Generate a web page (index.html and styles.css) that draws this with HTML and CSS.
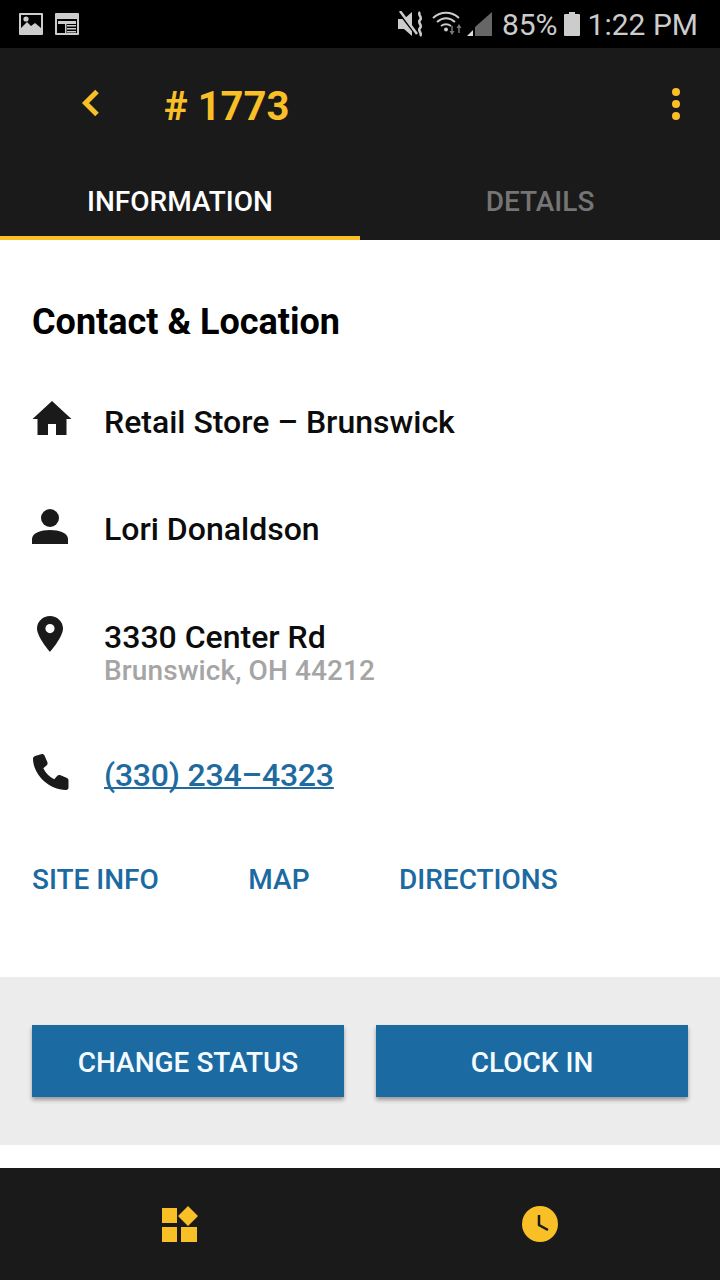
FILE: index.html
```html
<!DOCTYPE html>
<html lang="en">
  <head>
    <meta charset="UTF-8" />
    <meta name="viewport" content="width=device-width, initial-scale=1.0" />
    <title>Job 1773</title>
    <link rel="stylesheet" href="styles.css">
  </head>
  <body>
    <div class="phone">
      <div class="status-bar">
        <div class="status-left">
          <svg width="24" height="24" viewBox="0 0 24 24">
            <path fill="#ccc" fill-rule="evenodd" d="M1 1h22a1 1 0 0 1 1 1v20a1 1 0 0 1-1 1H1a1 1 0 0 1-1-1V2a1 1 0 0 1 1-1zm1 2v13l6-6 4 4 4-3 6 5V3z"/>
            <circle cx="7" cy="7" r="2.600" fill="#ccc"/>
          </svg>
          <svg width="24" height="24" viewBox="0 0 24 24">
            <path fill="#ccc" fill-rule="evenodd" d="M1 1h22a1 1 0 0 1 1 1v20a1 1 0 0 1-1 1H1a1 1 0 0 1-1-1V2a1 1 0 0 1 1-1zm1 6v14h20V7z"/>
            <path fill="#ccc" d="M3 9h18v3H3zM12 13h9v1.500h-9zM12 16h9v1.500h-9zM12 19h9v1.500h-9zM10 12h1.500v9H10z"/>
          </svg>
        </div>
        <div class="status-right">
          <svg class="icon-mute" width="28" height="26" viewBox="0 0 28 26">
            <path fill="#ccc" d="M0 8h6l8-7v24l-8-7H0z"/>
            <path stroke="#000" stroke-width="2" d="M1 2l17 22"/>
            <path stroke="#ccc" stroke-width="2.500" fill="none" d="M2 0l17 23M22 1c-3 3 3 5 0 8s3 5 0 8 3 5 0 8"/>
          </svg>
          <svg class="icon-wifi" width="32" height="26" viewBox="0 0 32 26">
            <g fill="none" stroke="#ccc" stroke-width="2">
              <path d="M1 7c8-7 18-7 26 0"/>
              <path d="M5 11c6-5 12-5 18 0"/>
              <path d="M9 15c3-2 7-2 10 0"/>
            </g>
            <circle cx="14" cy="18.500" r="2" fill="#ccc"/>
            <path stroke="#777" stroke-width="1.500" d="M20 15v8M27 14v8"/>
            <path fill="#777" d="M17.500 20h5L20 24zM24.500 17h5L27 13z"/>
          </svg>
          <svg class="icon-signal" width="25" height="24" viewBox="0 0 25 24">
            <path fill="#666" d="M8 24V15L25 0v24z"/>
            <path fill="#ddd" d="M0 24l6-6v6z"/>
          </svg>
          <span class="status-battery">85%</span>
          <svg class="icon-battery" width="16" height="24" viewBox="0 0 16 24">
            <path fill="#ccc" d="M5 0h6v2h4a1 1 0 0 1 1 1v20a1 1 0 0 1-1 1H1a1 1 0 0 1-1-1V3a1 1 0 0 1 1-1h4z"/>
          </svg>
          <span class="status-time">1:22 PM</span>
        </div>
      </div>

      <header class="app-bar">
        <div class="toolbar">
          <svg class="back" width="20" height="28" viewBox="0 0 20 28">
            <path fill="none" stroke="#f8bf27" stroke-width="5" d="M17 2.500L5.500 14 17 25.500"/>
          </svg>
          <h1 class="title"># 1773</h1>
          <div class="more"><span></span><span></span><span></span></div>
        </div>
        <nav class="tabs">
          <div class="tab active">INFORMATION</div>
          <div class="tab">DETAILS</div>
        </nav>
      </header>

      <main class="content">
        <h2 class="section-title">Contact &amp; Location</h2>
        <div class="row row-store">
          <svg class="row-icon" width="40" height="36" viewBox="0 0 40 36">
            <path fill="#1a1a1a" d="M20 0l19.500 18H34.500v16H24V23h-8v11H5.500V18H.5z"/>
          </svg>
          <div class="row-text">Retail Store – Brunswick</div>
        </div>
        <div class="row row-person">
          <svg class="row-icon" width="40" height="36" viewBox="0 0 40 36">
            <circle cx="18" cy="10" r="9" fill="#1a1a1a"/>
            <path fill="#1a1a1a" d="M0 36v-5c0-6 9-9 18-9s18 3 18 9v5z"/>
          </svg>
          <div class="row-text">Lori Donaldson</div>
        </div>
        <div class="row row-place">
          <svg class="row-icon" width="40" height="36" viewBox="0 0 40 36">
            <path fill="#1a1a1a" fill-rule="evenodd" d="M18 0c7 0 13 5.500 13 12.500C31 21 18 36 18 36S5 21 5 12.500C5 5.500 11 0 18 0zm0 8a4.600 4.600 0 1 0 0 9.200A4.600 4.600 0 0 0 18 8z"/>
          </svg>
          <div class="row-text">
            3330 Center Rd
            <div class="row-sub">Brunswick, OH 44212</div>
          </div>
        </div>
        <div class="row row-phone">
          <svg class="row-icon" width="40" height="38" viewBox="0 0 40 38">
            <path fill="#1a1a1a" d="M3 2l7-2c1 0 2 .5 2.500 1.500l3 7c.3 1 0 2-.7 2.700l-3.500 3c2.500 5 6 8.500 11 11l3-3.500c.7-.7 1.700-1 2.700-.7l7 3c1 .5 1.500 1.500 1.500 2.500v7c0 1.500-1 2.500-2.500 2.500C16 35.500 1 20 1 4.500 1 3.500 2 2.300 3 2z"/>
          </svg>
          <a class="row-text phone-link" href="#">(330) 234–4323</a>
        </div>
        <div class="links">
          <a href="#">SITE INFO</a>
          <a href="#">MAP</a>
          <a href="#">DIRECTIONS</a>
        </div>
      </main>

      <section class="actions">
        <button class="btn">CHANGE STATUS</button>
        <button class="btn">CLOCK IN</button>
      </section>

      <div class="spacer"></div>

      <footer class="bottom-nav">
        <svg width="36" height="36" viewBox="0 0 36 36">
          <path fill="#f8bf27" d="M0 2h15v15H0zM0 21h15v15H0zM19 21h16v15H19zM26 0l10 10-10 10-10-10z"/>
        </svg>
        <svg width="36" height="36" viewBox="0 0 36 36">
          <circle cx="18" cy="18" r="18" fill="#f8bf27"/>
          <path fill="none" stroke="#1a1a1a" stroke-width="2.500" d="M17 9v10l9 5"/>
        </svg>
      </footer>
    </div>
  </body>
</html>
```

FILE: styles.css
```css
/* Base styles */
html,
body {
  margin: 0;
  padding: 0;
}
body {
  font-family: Roboto, "Liberation Sans", sans-serif;
  background: #fff;
  color: #000;
}
.phone {
  width: 720px;
  height: 1280px;
  display: flex;
  flex-direction: column;
  overflow: hidden;
}

/* Status bar */
.status-bar {
  height: 48px;
  background: #000;
  color: #ccc;
  display: flex;
  justify-content: space-between;
  align-items: center;
  padding: 0 22px 0 19px;
  box-sizing: border-box;
}
.status-left {
  display: flex;
  gap: 12px;
}
.status-right {
  display: flex;
  align-items: center;
  font-size: 30px;
}
.icon-wifi {
  margin-left: 6px;
}
.icon-signal {
  margin-left: 3px;
}
.status-battery {
  margin-left: 10px;
}
.icon-battery {
  margin-left: 6px;
}
.status-time {
  margin-left: 8px;
}

/* App bar and tabs */
.app-bar {
  height: 192px;
  background: #1a1a1a;
  display: flex;
  flex-direction: column;
  flex-shrink: 0;
}
.toolbar {
  height: 128px;
  display: flex;
  align-items: center;
  padding: 0 40px 12px 80px;
  box-sizing: border-box;
}
.back {
  margin-bottom: 6px;
}
.title {
  margin: 0 0 0 64px;
  flex: 1;
  color: #f8bf27;
  font-size: 40px;
  font-weight: 700;
}
.more {
  display: flex;
  flex-direction: column;
  gap: 4px;
  margin-bottom: 4px;
}
.more span {
  width: 8px;
  height: 8px;
  border-radius: 50%;
  background: #f8bf27;
}
.tabs {
  flex: 1;
  display: flex;
}
.tab {
  flex: 1;
  display: flex;
  align-items: center;
  justify-content: center;
  font-size: 28px;
  font-weight: 500;
  color: #757575;
  padding-bottom: 14px;
  box-sizing: border-box;
}
.tab.active {
  color: #fff;
  border-bottom: 4px solid #f8bf27;
  padding-bottom: 10px;
}

/* Contact section */
.content {
  height: 737px;
  padding: 61px 32px 0;
  box-sizing: border-box;
  flex-shrink: 0;
}
.section-title {
  margin: 0;
  font-size: 36px;
  line-height: 42px;
  font-weight: 700;
}
.row {
  display: flex;
  align-items: flex-start;
}
.row-store {
  margin-top: 58px;
}
.row-person {
  margin-top: 68px;
}
.row-place {
  margin-top: 69px;
}
.row-phone {
  margin-top: 67px;
}
.row-icon {
  flex-shrink: 0;
  margin-right: 32px;
}
.row-text {
  margin-top: 3px;
  font-size: 32px;
  line-height: 36px;
  font-weight: 500;
  color: #0c0c0c;
}
.row-sub {
  font-size: 28px;
  line-height: 32px;
  letter-spacing: 0.1px;
  color: #a5a5a5;
}
.phone-link {
  color: #1f6a9f;
  letter-spacing: -0.2px;
  text-decoration: underline;
  text-decoration-thickness: 1.500px;
  text-decoration-skip-ink: none;
}
.links {
  display: flex;
  gap: 89.500px;
  margin-top: 70px;
}
.links a {
  color: #1b6aa2;
  font-size: 28px;
  font-weight: 500;
  text-decoration: none;
}

/* Buttons */
.actions {
  height: 168px;
  background: #ececec;
  display: flex;
  gap: 32px;
  align-items: center;
  padding: 0 32px;
  box-sizing: border-box;
  flex-shrink: 0;
}
.btn {
  flex: 1;
  height: 72px;
  border: none;
  padding: 3px 0 0;
  background: #1b6aa2;
  color: #f4fbff;
  font-family: inherit;
  font-size: 28px;
  font-weight: 500;
  box-shadow: 0 3px 4px rgba(0, 0, 0, 0.35);
}
.spacer {
  height: 23px;
  flex-shrink: 0;
}

/* Bottom nav */
.bottom-nav {
  flex: 1;
  background: #1a1a1a;
  display: flex;
  align-items: center;
}
.bottom-nav svg {
  flex: 1;
}
```
